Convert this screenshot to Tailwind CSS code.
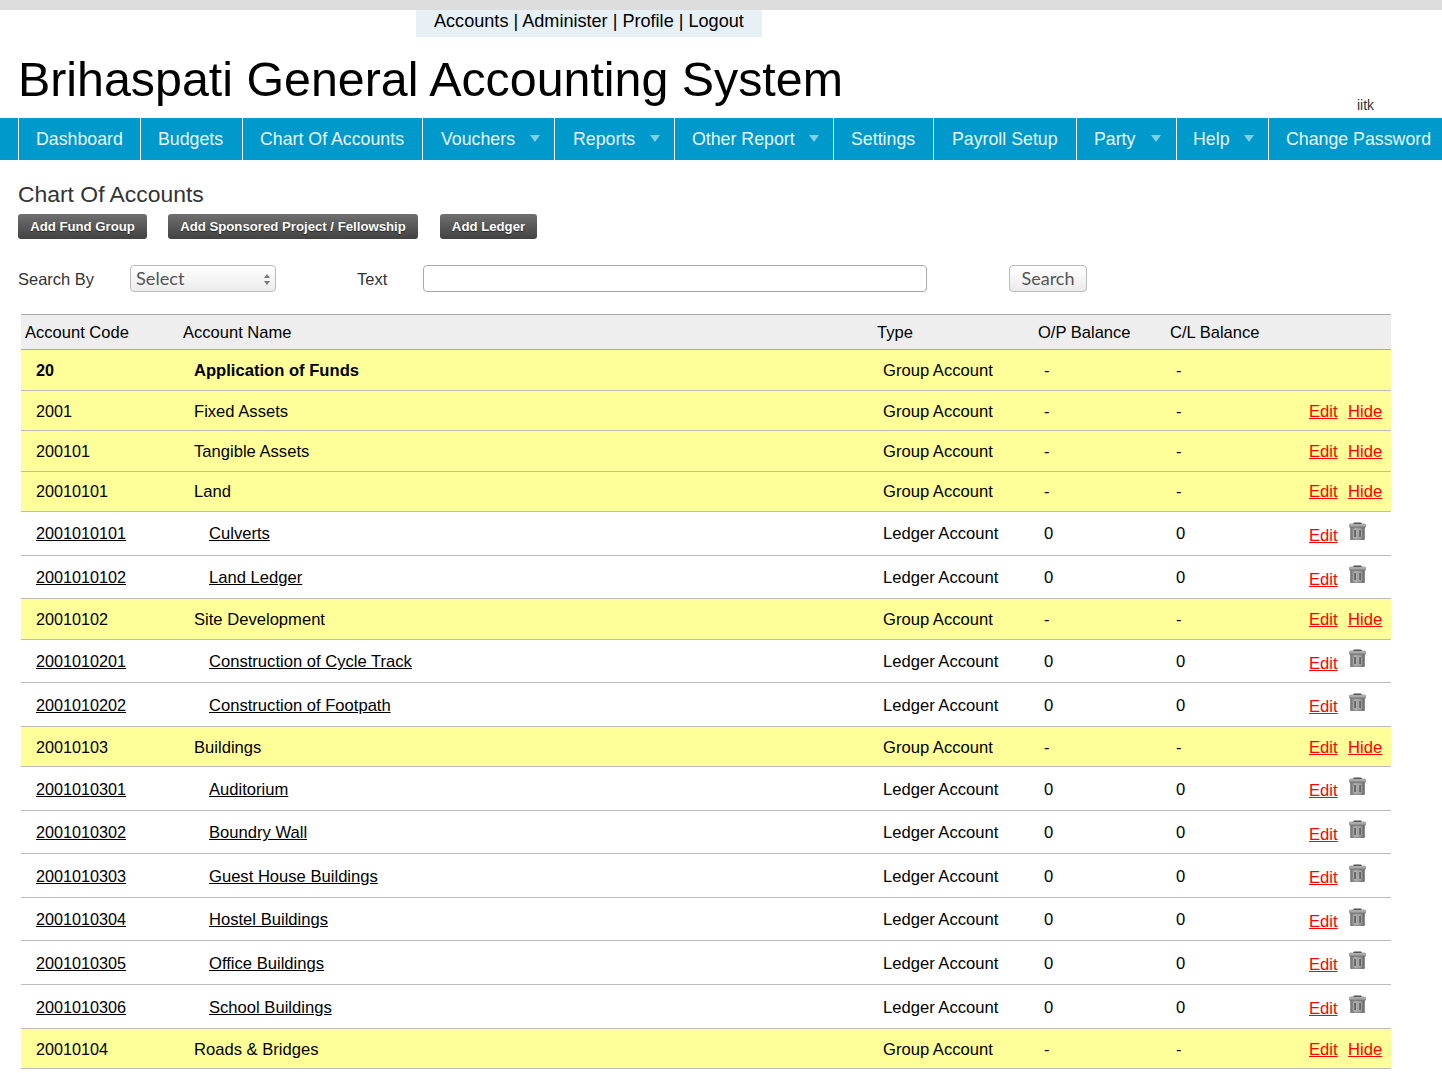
<!DOCTYPE html>
<html lang="en">
<head>
    <meta charset="UTF-8" />
    <title>Brihaspati General Accounting System</title>
    <script src="https://cdn.jsdelivr.net/npm/@tailwindcss/browser@4"></script>
</head>
<body class="h-screen overflow-hidden bg-white font-['Liberation_Sans',Arial,sans-serif] text-black">
    <svg class="absolute w-0 h-0">
        <defs>
            <linearGradient id="tg" x1="0" x2="1" y1="0" y2="0">
                <stop offset="0" stop-color="#707070" />
                <stop offset="0.35" stop-color="#ababab" />
                <stop offset="0.7" stop-color="#969696" />
                <stop offset="1" stop-color="#666" />
            </linearGradient>
            <linearGradient id="tl" x1="0" x2="0" y1="0" y2="1">
                <stop offset="0" stop-color="#cccccc" />
                <stop offset="1" stop-color="#787878" />
            </linearGradient>
            <symbol id="trash" viewBox="0 0 17 18">
                <path d="M5 0.5h7l1 1.5H4z" fill="#4a4a4a" />
                <rect x="0.5" y="2" width="16" height="3.5" rx="0.8" fill="url(#tl)" stroke="#777" stroke-width="0.6" />
                <path d="M1.5 5.5h14v11.5a1 1 0 0 1-1 1h-12a1 1 0 0 1-1-1z" fill="url(#tg)" stroke="#666" stroke-width="0.5" />
                <rect x="4.5" y="7.5" width="3" height="8" fill="#b8b8b8" />
                <rect x="9.5" y="7.5" width="3" height="8" fill="#b8b8b8" />
                <rect x="5.3" y="8" width="1.5" height="7" fill="#505050" />
                <rect x="10.3" y="8" width="1.5" height="7" fill="#505050" />
            </symbol>
        </defs>
    </svg>

    <!-- Top strip -->
    <div class="h-[10px] bg-[#dddddd]"></div>
    <div class="ml-[416px] w-[346px] h-[27px] bg-[#e6f0f5] pl-[18px] text-[18.1px] leading-[22px] whitespace-pre">Accounts | Administer | Profile | Logout</div>

    <!-- Title -->
    <div class="relative h-[81px]">
        <h1 class="pl-[18px] pt-[12px] text-[48.35px] leading-[60px] whitespace-nowrap">Brihaspati General Accounting System</h1>
        <span class="absolute left-[1357px] top-[60px] text-[14px] leading-4 text-[#333]">iitk</span>
    </div>

    <!-- Nav -->
    <nav class="flex h-[42px] pl-[18px] bg-[#0099cc] text-[17.75px] leading-[42px] text-[#e8f6fb] whitespace-nowrap">
        <a class="w-[122px] shrink-0 border-l border-white pl-[17px]">Dashboard</a>
        <a class="w-[102px] shrink-0 border-l border-white pl-[17px]">Budgets</a>
        <a class="w-[180px] shrink-0 border-l border-white pl-[17px]">Chart Of Accounts</a>
        <a class="relative w-[132px] shrink-0 border-l border-white pl-[18px]">Vouchers<i class="absolute left-[107px] top-[17px] border-x-[5.5px] border-t-[7px] border-x-transparent border-t-[#80cfe8]"></i></a>
        <a class="relative w-[120px] shrink-0 border-l border-white pl-[18px]">Reports<i class="absolute left-[95px] top-[17px] border-x-[5.5px] border-t-[7px] border-x-transparent border-t-[#80cfe8]"></i></a>
        <a class="relative w-[159px] shrink-0 border-l border-white pl-[17px]">Other Report<i class="absolute left-[134px] top-[17px] border-x-[5.5px] border-t-[7px] border-x-transparent border-t-[#80cfe8]"></i></a>
        <a class="w-[100px] shrink-0 border-l border-white pl-[17px]">Settings</a>
        <a class="w-[143px] shrink-0 border-l border-white pl-[18px]">Payroll Setup</a>
        <a class="relative w-[100px] shrink-0 border-l border-white pl-[17px]">Party<i class="absolute left-[74px] top-[17px] border-x-[5.5px] border-t-[7px] border-x-transparent border-t-[#80cfe8]"></i></a>
        <a class="relative w-[92px] shrink-0 border-l border-white pl-[16px]">Help<i class="absolute left-[67px] top-[17px] border-x-[5.5px] border-t-[7px] border-x-transparent border-t-[#80cfe8]"></i></a>
        <a class="shrink-0 border-l border-white pl-[17px]">Change Password</a>
    </nav>

    <!-- Page heading and actions -->
    <h2 class="pl-[18px] pt-[21px] text-[22.9px] leading-[27px] text-[#333]">Chart Of Accounts</h2>
    <div class="flex pl-[18px] pt-[6px] text-[13.2px] font-bold text-white [text-shadow:0_1px_1px_#222]">
        <a class="flex items-center justify-center w-[129px] h-[25px] rounded-[3px] bg-linear-to-b from-[#707070] to-[#424242]">Add Fund Group</a>
        <a class="flex items-center justify-center ml-[21px] w-[250px] h-[25px] rounded-[3px] bg-linear-to-b from-[#707070] to-[#424242]">Add Sponsored Project / Fellowship</a>
        <a class="flex items-center justify-center ml-[22px] w-[97px] h-[25px] rounded-[3px] bg-linear-to-b from-[#707070] to-[#424242]">Add Ledger</a>
    </div>

    <!-- Search -->
    <div class="flex items-center h-[27px] mt-[26px] pl-[18px] text-[16.5px] text-[#333]">
        <span class="w-[112px] shrink-0 pt-[2px]">Search By</span>
        <div class="relative w-[146px] h-[27px] shrink-0">
            <select class="appearance-none w-full h-full pl-[5px] rounded-[4px] border border-[#bbb] bg-linear-to-b from-white to-[#ececec] font-['Lato',sans-serif] text-[18.2px] leading-none text-[#555]">
                <option>Select</option>
            </select>
            <i class="absolute right-[6px] top-[9px] border-x-[3px] border-b-[4px] border-x-transparent border-b-[#777]"></i>
            <i class="absolute right-[6px] top-[16px] border-x-[3px] border-t-[4px] border-x-transparent border-t-[#777]"></i>
        </div>
        <span class="ml-[81px] w-[66px] shrink-0 pt-[2px]">Text</span>
        <input class="w-[504px] h-[27px] shrink-0 rounded-[4px] border border-[#aaa] bg-white" />
        <button class="ml-[82px] w-[78px] h-[27px] shrink-0 pb-[2px] rounded-[4px] border border-[#bbb] bg-linear-to-b from-white to-[#ececec] font-['Lato',sans-serif] text-[18px] leading-none text-[#555]">Search</button>
    </div>

    <!-- Accounts table -->
    <div class="ml-[21px] mt-[22px] w-[1370px] text-[16.6px] leading-[25px]">
        <div class="grid grid-cols-[158px_694px_161px_132px_1fr] items-center h-[36.4px] pl-1 border-y border-[#aaa] bg-[#eeeeee] text-[16.55px]">
            <div>Account Code</div><div>Account Name</div><div>Type</div><div>O/P Balance</div><div>C/L Balance</div>
        </div>

        <div class="grid grid-cols-[158px_689px_161px_132px_133px_1fr] items-center h-[40.4px] pl-[15px] pt-[1.4px] border-b border-[#bbb] bg-[#ffff99]">
            <div class="font-bold text-[16.2px]">20</div><div class="font-bold">Application of Funds</div><div>Group Account</div><div>-</div><div>-</div><div></div>
        </div>
        <div class="grid grid-cols-[158px_689px_161px_132px_133px_1fr] items-center h-[40.4px] pl-[15px] pt-[1.4px] border-b border-[#bbb] bg-[#ffff99]">
            <div class="text-[16.2px]">2001</div><div>Fixed Assets</div><div>Group Account</div><div>-</div><div>-</div><div class="whitespace-nowrap"><a class="text-[#ff0000] underline">Edit</a><a class="ml-[10.5px] text-[#ff0000] underline">Hide</a></div>
        </div>
        <div class="grid grid-cols-[158px_689px_161px_132px_133px_1fr] items-center h-[40.4px] pl-[15px] pt-[1.4px] border-b border-[#bbb] bg-[#ffff99]">
            <div class="text-[16.2px]">200101</div><div>Tangible Assets</div><div>Group Account</div><div>-</div><div>-</div><div class="whitespace-nowrap"><a class="text-[#ff0000] underline">Edit</a><a class="ml-[10.5px] text-[#ff0000] underline">Hide</a></div>
        </div>
        <div class="grid grid-cols-[158px_689px_161px_132px_133px_1fr] items-center h-[40.4px] pl-[15px] pt-[1.4px] border-b border-[#bbb] bg-[#ffff99]">
            <div class="text-[16.2px]">20010101</div><div>Land</div><div>Group Account</div><div>-</div><div>-</div><div class="whitespace-nowrap"><a class="text-[#ff0000] underline">Edit</a><a class="ml-[10.5px] text-[#ff0000] underline">Hide</a></div>
        </div>

        <div class="grid grid-cols-[158px_689px_161px_132px_133px_1fr] items-center h-[43.6px] pl-[15px] pt-[1.4px] border-b border-[#bbb]">
            <a class="underline text-[16.2px]">2001010101</a><div class="pl-[15px]"><a class="underline">Culverts</a></div><div>Ledger Account</div><div>0</div><div>0</div><div class="flex whitespace-nowrap"><a class="mt-[3px] text-[#ff0000] underline">Edit</a><svg class="ml-[11px] mt-[1.8px] w-[17px] h-[18px]"><use href="#trash" /></svg></div>
        </div>
        <div class="grid grid-cols-[158px_689px_161px_132px_133px_1fr] items-center h-[43.6px] pl-[15px] pt-[1.4px] border-b border-[#bbb]">
            <a class="underline text-[16.2px]">2001010102</a><div class="pl-[15px]"><a class="underline">Land Ledger</a></div><div>Ledger Account</div><div>0</div><div>0</div><div class="flex whitespace-nowrap"><a class="mt-[3px] text-[#ff0000] underline">Edit</a><svg class="ml-[11px] mt-[1.8px] w-[17px] h-[18px]"><use href="#trash" /></svg></div>
        </div>

        <div class="grid grid-cols-[158px_689px_161px_132px_133px_1fr] items-center h-[40.4px] pl-[15px] pt-[1.4px] border-b border-[#bbb] bg-[#ffff99]">
            <div class="text-[16.2px]">20010102</div><div>Site Development</div><div>Group Account</div><div>-</div><div>-</div><div class="whitespace-nowrap"><a class="text-[#ff0000] underline">Edit</a><a class="ml-[10.5px] text-[#ff0000] underline">Hide</a></div>
        </div>
        <div class="grid grid-cols-[158px_689px_161px_132px_133px_1fr] items-center h-[43.6px] pl-[15px] pt-[1.4px] border-b border-[#bbb]">
            <a class="underline text-[16.2px]">2001010201</a><div class="pl-[15px]"><a class="underline">Construction of Cycle Track</a></div><div>Ledger Account</div><div>0</div><div>0</div><div class="flex whitespace-nowrap"><a class="mt-[3px] text-[#ff0000] underline">Edit</a><svg class="ml-[11px] mt-[1.8px] w-[17px] h-[18px]"><use href="#trash" /></svg></div>
        </div>
        <div class="grid grid-cols-[158px_689px_161px_132px_133px_1fr] items-center h-[43.6px] pl-[15px] pt-[1.4px] border-b border-[#bbb]">
            <a class="underline text-[16.2px]">2001010202</a><div class="pl-[15px]"><a class="underline">Construction of Footpath</a></div><div>Ledger Account</div><div>0</div><div>0</div><div class="flex whitespace-nowrap"><a class="mt-[3px] text-[#ff0000] underline">Edit</a><svg class="ml-[11px] mt-[1.8px] w-[17px] h-[18px]"><use href="#trash" /></svg></div>
        </div>

        <div class="grid grid-cols-[158px_689px_161px_132px_133px_1fr] items-center h-[40.4px] pl-[15px] pt-[1.4px] border-b border-[#bbb] bg-[#ffff99]">
            <div class="text-[16.2px]">20010103</div><div>Buildings</div><div>Group Account</div><div>-</div><div>-</div><div class="whitespace-nowrap"><a class="text-[#ff0000] underline">Edit</a><a class="ml-[10.5px] text-[#ff0000] underline">Hide</a></div>
        </div>
        <div class="grid grid-cols-[158px_689px_161px_132px_133px_1fr] items-center h-[43.6px] pl-[15px] pt-[1.4px] border-b border-[#bbb]">
            <a class="underline text-[16.2px]">2001010301</a><div class="pl-[15px]"><a class="underline">Auditorium</a></div><div>Ledger Account</div><div>0</div><div>0</div><div class="flex whitespace-nowrap"><a class="mt-[3px] text-[#ff0000] underline">Edit</a><svg class="ml-[11px] mt-[1.8px] w-[17px] h-[18px]"><use href="#trash" /></svg></div>
        </div>
        <div class="grid grid-cols-[158px_689px_161px_132px_133px_1fr] items-center h-[43.6px] pl-[15px] pt-[1.4px] border-b border-[#bbb]">
            <a class="underline text-[16.2px]">2001010302</a><div class="pl-[15px]"><a class="underline">Boundry Wall</a></div><div>Ledger Account</div><div>0</div><div>0</div><div class="flex whitespace-nowrap"><a class="mt-[3px] text-[#ff0000] underline">Edit</a><svg class="ml-[11px] mt-[1.8px] w-[17px] h-[18px]"><use href="#trash" /></svg></div>
        </div>
        <div class="grid grid-cols-[158px_689px_161px_132px_133px_1fr] items-center h-[43.6px] pl-[15px] pt-[1.4px] border-b border-[#bbb]">
            <a class="underline text-[16.2px]">2001010303</a><div class="pl-[15px]"><a class="underline">Guest House Buildings</a></div><div>Ledger Account</div><div>0</div><div>0</div><div class="flex whitespace-nowrap"><a class="mt-[3px] text-[#ff0000] underline">Edit</a><svg class="ml-[11px] mt-[1.8px] w-[17px] h-[18px]"><use href="#trash" /></svg></div>
        </div>
        <div class="grid grid-cols-[158px_689px_161px_132px_133px_1fr] items-center h-[43.6px] pl-[15px] pt-[1.4px] border-b border-[#bbb]">
            <a class="underline text-[16.2px]">2001010304</a><div class="pl-[15px]"><a class="underline">Hostel Buildings</a></div><div>Ledger Account</div><div>0</div><div>0</div><div class="flex whitespace-nowrap"><a class="mt-[3px] text-[#ff0000] underline">Edit</a><svg class="ml-[11px] mt-[1.8px] w-[17px] h-[18px]"><use href="#trash" /></svg></div>
        </div>
        <div class="grid grid-cols-[158px_689px_161px_132px_133px_1fr] items-center h-[43.6px] pl-[15px] pt-[1.4px] border-b border-[#bbb]">
            <a class="underline text-[16.2px]">2001010305</a><div class="pl-[15px]"><a class="underline">Office Buildings</a></div><div>Ledger Account</div><div>0</div><div>0</div><div class="flex whitespace-nowrap"><a class="mt-[3px] text-[#ff0000] underline">Edit</a><svg class="ml-[11px] mt-[1.8px] w-[17px] h-[18px]"><use href="#trash" /></svg></div>
        </div>
        <div class="grid grid-cols-[158px_689px_161px_132px_133px_1fr] items-center h-[43.6px] pl-[15px] pt-[1.4px] border-b border-[#bbb]">
            <a class="underline text-[16.2px]">2001010306</a><div class="pl-[15px]"><a class="underline">School Buildings</a></div><div>Ledger Account</div><div>0</div><div>0</div><div class="flex whitespace-nowrap"><a class="mt-[3px] text-[#ff0000] underline">Edit</a><svg class="ml-[11px] mt-[1.8px] w-[17px] h-[18px]"><use href="#trash" /></svg></div>
        </div>
        <div class="grid grid-cols-[158px_689px_161px_132px_133px_1fr] items-center h-[40.4px] pl-[15px] pt-[1.4px] border-b border-[#bbb] bg-[#ffff99]">
            <div class="text-[16.2px]">20010104</div><div>Roads &amp; Bridges</div><div>Group Account</div><div>-</div><div>-</div><div class="whitespace-nowrap"><a class="text-[#ff0000] underline">Edit</a><a class="ml-[10.5px] text-[#ff0000] underline">Hide</a></div>
        </div>
    </div>
</body>
</html>
